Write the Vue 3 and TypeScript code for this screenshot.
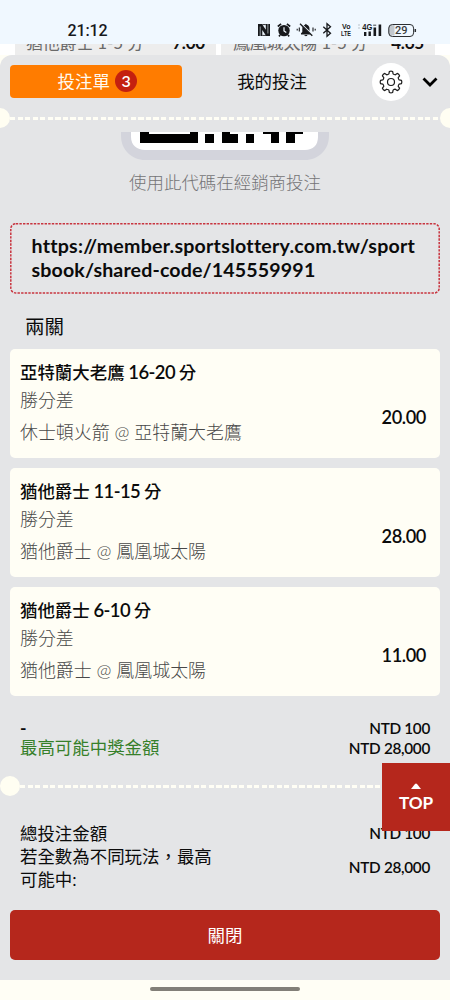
<script setup lang="ts">
interface Leg {
  team: string
  range: string
  market: string
  match: string
  odds: string
}

const legs: Leg[] = [
  { team: '亞特蘭大老鷹', range: '16-20', market: '勝分差', match: '休士頓火箭 @ 亞特蘭大老鷹', odds: '20.00' },
  { team: '猶他爵士', range: '11-15', market: '勝分差', match: '猶他爵士 @ 鳳凰城太陽', odds: '28.00' },
  { team: '猶他爵士', range: '6-10', market: '勝分差', match: '猶他爵士 @ 鳳凰城太陽', odds: '11.00' },
]

const teeth = 8
const gear: string = (() => {
  const pts: string[] = []
  for (let i = 0; i < teeth; i++) {
    const a = (i * 2 * Math.PI) / teeth
    const p = (r: number, d: number) =>
      `${(12 + r * Math.sin(a + d)).toFixed(2)} ${(12 - r * Math.cos(a + d)).toFixed(2)}`
    pts.push(`${i ? 'L' : 'M'}${p(8.4, -0.25)} L${p(10.6, -0.16)} Q${p(11.2, 0)} ${p(10.6, 0.16)} L${p(8.4, 0.25)} Q${p(7.9, 0.39)} ${p(8.4, 0.535)}`)
  }
  return pts.join(' ') + 'Z'
})()
</script>

<template>
  <main class="phone">
    <header class="status">
      <span class="clock">21:12</span>
      <svg class="tray" width="160" height="18" viewBox="0 0 160 18">
        <g fill="#17191c">
          <path d="M0 3h4l3.8 5.8V3H12v12H8.2L4.3 9v6H0z" />
          <path d="M4.3 3.6h3.5M4.3 14.4h3.9" stroke="#17191c" stroke-width=".9" />
          <path d="M2.2 5.5V15M9.9 3v9.5" stroke="#f0f8ff" stroke-width=".6" />
          <circle cx="26" cy="9.6" r="5.7" />
          <path d="M19.8 5.5l3.3-2.6M28.9 2.9l3.3 2.6M22.2 14l-1.3 1.4M29.9 14l1.3 1.4" stroke="#17191c" stroke-width="1.6" />
          <path d="M26 6.3v3.6l2.3 1.6" fill="none" stroke="#f0f8ff" stroke-width="1.2" />
          <path d="M43 13.4v-1.2l1.3-1.2V8c0-2.4 1-3.7 2.7-4.2l.9-1.1.9 1.1c1.7.5 2.7 1.8 2.7 4.2v3l1.3 1.2v1.2zM46.4 14.1h3c-.3 1.6-2.7 1.6-3 0z" />
          <path d="M43 2.8l12 11.6" stroke="#f0f8ff" stroke-width="1.6" />
          <path d="M42 2.7l12.3 12" stroke="#17191c" stroke-width="1.3" />
          <path d="M41.3 6.5v4M39.2 7.8v1.8M55 6.5v4M57.2 7.8v1.8" stroke="#17191c" stroke-width="1.1" />
          <path d="M65.3 5.7l7.2 6.6-3.5 3V2.7l3.5 3-7.2 6.6" fill="none" stroke="#17191c" stroke-width="1.3" />
          <rect x="106" y="11" width="2.4" height="4" />
          <rect x="110.5" y="10.5" width="2.4" height="4.5" />
          <rect x="115.5" y="6.5" width="2.6" height="8.5" />
          <rect x="120.6" y="3.5" width="2.6" height="11.5" />
        </g>
        <text x="84" y="8.2" class="tiny" textLength="8.5" lengthAdjust="spacingAndGlyphs">Vo</text>
        <text x="83" y="15.3" class="tiny" textLength="10" lengthAdjust="spacingAndGlyphs">LTE</text>
        <path d="M100 4h2M100 7h2" stroke="#b9c2ca" stroke-width="1" />
        <text x="104.3" y="9" class="gen" textLength="10" lengthAdjust="spacingAndGlyphs">4G</text>
        <path d="M115.2 4.2h3" stroke="#17191c" stroke-width=".8" />
        <path d="M134.5 4h-1c-2 0-3.4 1.4-3.4 3.4v3.8c0 2 1.4 3.4 3.4 3.4h3V4z" fill="#c2c8ce" />
        <rect x="130.8" y="3.5" width="24.8" height="12" rx="3.6" fill="none" stroke="#2b2e31" />
        <path d="M157.3 8v3" stroke="#2b2e31" stroke-width="1.5" />
        <text x="143.3" y="13.4" class="pct">29</text>
      </svg>
    </header>

    <section class="peek">
      <div class="peek-card"><span>猶他爵士 1-5 分</span><b>7.00</b></div>
      <div class="peek-card wide"><span>鳳凰城太陽 1-5 分</span><b>4.65</b></div>
    </section>

    <section class="panel">
      <nav class="tabs">
        <button class="tab active">投注單<i class="count">3</i></button>
        <button class="tab other">我的投注</button>
        <button class="gear">
          <svg width="24" height="24" viewBox="0 0 24 24" fill="none" stroke="#1c1c1c" stroke-width="1.2" stroke-linejoin="round">
            <path :d="gear" />
            <circle cx="12" cy="12" r="3.5" />
          </svg>
        </button>
        <svg class="chevron" width="18" height="12" viewBox="0 0 18 12"><path d="M2.5 2.5L9 9l6.5-6.5" fill="none" stroke="#000" stroke-width="2.8" /></svg>
      </nav>

      <div class="tear top"><i class="hole"></i><i class="dash"></i><i class="hole"></i></div>

      <div class="share">
        <svg width="208" height="28" viewBox="0 0 208 28">
          <path d="M0 0h208v4c0 14-11 24-24 24H24C11 28 0 18 0 4z" fill="#d3d4dc" />
          <path d="M10 0h187v5c0 8-5 13-13 13H24c-8 0-14-5-14-13z" fill="#fff" />
          <path d="M19 0h9v2h41V0h8v11H19zM84 2h9v9h-9zM101 0h8v2h8v9h-16zM125 2h8v9h-8zM142 0h16v11h-8V2h-8zM165 0h17v2h-8v9h-9z" fill="#000" />
        </svg>
        <p>使用此代碼在經銷商投注</p>
      </div>

      <div class="link">
        <svg class="outline" width="430" height="71" viewBox="0 0 430 71"><rect x=".8" y=".8" width="428.4" height="69.2" rx="5" fill="none" stroke="#c8343f" stroke-width="1.5" stroke-dasharray="2.4 1.2" /></svg>
        <span>https://member.sportslottery.com.tw/sport</span><span class="second">sbook/shared-code/145559991</span>
      </div>

      <h2>兩關</h2>
      <article v-for="leg in legs" :key="leg.team + leg.range" class="leg">
        <div>
          <h3>{{ leg.team }} <span>{{ leg.range }}</span> 分</h3>
          <p class="market">{{ leg.market }}</p>
          <p class="match">{{ leg.match }}</p>
        </div>
        <strong>{{ leg.odds }}</strong>
      </article>

      <dl class="stake">
        <div><dt>-</dt><dd>NTD 100</dd></div>
        <div><dt class="win">最高可能中獎金額</dt><dd>NTD 28,000</dd></div>
      </dl>

      <div class="tear lower"><i class="hole"></i><i class="dash"></i></div>

      <dl class="total">
        <div><dt>總投注金額</dt><dd>NTD 100</dd></div>
        <div><dt>若全數為不同玩法，最高<br />可能中:</dt><dd>NTD 28,000</dd></div>
      </dl>

      <button class="close">關閉</button>
    </section>

    <footer class="home"><i></i></footer>

    <button class="to-top">
      <svg width="10" height="6" viewBox="0 0 10 6"><path d="M0 6l4-5q1-1 2 0l4 5z" fill="#fff" /></svg>
      <span>TOP</span>
    </button>
  </main>
</template>

<style>
body {
  margin: 0;
}
</style>

<style scoped>
* {
  box-sizing: border-box;
}
.phone {
  position: relative;
  width: 450px;
  height: 1000px;
  overflow: hidden;
  display: flex;
  flex-direction: column;
  background: #fffef5;
  color: #0b0b0b;
  font-family: Lato, 'Noto Sans CJK TC', sans-serif;
  font-size: 17.45px;
}
button {
  border: 0;
  padding: 0;
  font: inherit;
  color: inherit;
  background: none;
}
p, h2, h3, dl, dd {
  margin: 0;
  font-weight: 400;
}
i {
  font-style: normal;
}
.status {
  height: 44px;
  flex: none;
  background: #f0f8ff;
  display: flex;
  justify-content: space-between;
  padding: 21px 32.5px 0 67.5px;
}
.clock {
  font: 500 16px/20px Roboto, sans-serif;
  letter-spacing: -0.1px;
  color: #17191c;
}
.tray {
  display: block;
}
.tiny {
  font: 700 7.6px 'Liberation Sans', sans-serif;
  fill: #17191c;
}
.gen {
  font: 700 8.5px 'Liberation Sans', sans-serif;
  fill: #17191c;
}
.pct {
  font: 500 11px Roboto, sans-serif;
  text-anchor: middle;
  fill: #3a3d40;
}
.peek {
  height: 11px;
  flex: none;
  display: flex;
  gap: 5px;
  padding: 0 15px;
  background: #fff;
}
.peek-card {
  width: 201px;
  height: 18px;
  overflow: hidden;
  background: #ededed;
  display: flex;
  justify-content: space-between;
  padding: 0 11px;
  color: #6a6a6a;
  line-height: 20px;
}
.peek-card.wide {
  width: 214px;
  padding-left: 12px;
}
.peek-card span,
.peek-card b {
  margin-top: -11px;
  white-space: pre;
  font-size: 17px;
  letter-spacing: -0.2px;
}
.peek-card b {
  color: #111;
}
.panel {
  position: relative;
  height: 925px;
  flex: none;
  background: #e4e5e7;
  border-radius: 12px 12px 0 0;
}
.tabs {
  height: 53px;
  display: flex;
  align-items: center;
  padding: 0 10px;
}
.tab {
  height: 33px;
  display: flex;
  align-items: center;
  justify-content: center;
}
.active {
  width: 172px;
  border-radius: 4px;
  background: #ff7c00;
  color: #fffaf0;
  gap: 5px;
  padding: 0 0 2px 3px;
}
.count {
  width: 22.5px;
  height: 22.5px;
  margin-top: 1px;
  border-radius: 50%;
  background: #c4200f;
  color: #fff;
  font: 600 16px/22px Lato, sans-serif;
}
.other {
  width: 180px;
  padding-bottom: 2px;
}
.gear {
  width: 38px;
  height: 38px;
  margin-left: 10.4px;
  border-radius: 50%;
  background: #fff;
  display: grid;
  place-items: center;
}
.chevron {
  margin-left: 11px;
}
.tear {
  display: flex;
  align-items: center;
  height: 20px;
}
.tear.top {
  margin: 0 -10px;
}
.hole {
  flex: none;
  width: 20px;
  height: 20px;
  border-radius: 50%;
  background: #fffef2;
}
.dash {
  flex: 1;
  height: 3px;
  margin-top: 1px;
  background: repeating-linear-gradient(90deg, #fffef5 0 5.2px, transparent 5.2px 7.55px);
}
.lower .dash {
  margin-top: 2px;
}
.share {
  height: 91px;
  padding-top: 4px;
  text-align: center;
}
.share svg {
  display: block;
  margin: 0 auto 0 121px;
}
.share p {
  margin-top: 10px;
  line-height: 26px;
  color: #747476;
  font-weight: 300;
}
.link {
  position: relative;
  height: 71px;
  margin: 4px 10px 0;
  padding: 11.4px 21.5px;
  font-size: 19.6px;
  font-weight: 700;
  line-height: 24px;
  letter-spacing: 0.23px;
  font-variant-ligatures: none;
}
.link .second {
  letter-spacing: 0.14px;
}
.outline {
  position: absolute;
  inset: 0;
}
.link span {
  display: block;
  white-space: nowrap;
}
h2 {
  height: 55.4px;
  padding: 19px 25px 0;
  font-size: 19.5px;
  line-height: 28px;
}
.leg {
  height: 109px;
  margin: 0 10px 9.8px;
  border-radius: 5px;
  background: #fffef5;
  display: flex;
  justify-content: space-between;
  padding: 10.7px 14px 0 10px;
}
.leg h3 {
  font-size: 17.45px;
  font-weight: 500;
  line-height: 25px;
  word-spacing: -0.7px;
}
.leg h3 span {
  font-size: 18.4px;
  font-weight: 600;
  letter-spacing: -0.55px;
}
.leg p {
  font-weight: 300;
  font-size: 17.95px;
  color: #484848;
  line-height: 26px;
}
.market {
  margin-top: 2px;
}
.leg .match {
  margin-top: 6px;
}
.leg strong {
  margin-top: 45px;
  font-size: 18.2px;
  font-weight: 600;
  letter-spacing: -0.4px;
  line-height: 25px;
}
dl > div {
  display: flex;
  justify-content: space-between;
}
dd {
  font-size: 15.3px;
  font-weight: 600;
  letter-spacing: -0.3px;
}
.stake {
  height: 69.8px;
  padding: 12.5px 20px 0;
  line-height: 20px;
}
.stake dt {
  font-weight: 700;
}
.stake .win {
  color: #36802a;
  font-weight: 400;
}
.total {
  height: 114.8px;
  padding: 26.3px 20px 0;
  line-height: 23px;
}
.total > div {
  align-items: center;
}
.total dt {
  font-weight: 400;
}
.close {
  display: block;
  width: 430px;
  height: 50px;
  margin: 0 10px;
  padding-bottom: 2px;
  border-radius: 5px;
  background: #b5271c;
  color: #fff;
  text-align: center;
}
.home {
  height: 20px;
  background: #fffef5;
}
.home i {
  display: block;
  width: 150px;
  height: 4px;
  border-radius: 2px;
  margin: 7px auto 0;
  background: #827f78;
}
.to-top {
  position: absolute;
  right: 0;
  top: 763px;
  width: 68px;
  height: 68px;
  background: #b5271c;
  color: #fff;
  display: flex;
  flex-direction: column;
  align-items: center;
  padding-top: 20px;
  font-size: 17.2px;
  font-weight: 700;
  line-height: 22px;
}
.to-top span {
  margin-top: 3px;
  letter-spacing: -0.2px;
}
</style>
